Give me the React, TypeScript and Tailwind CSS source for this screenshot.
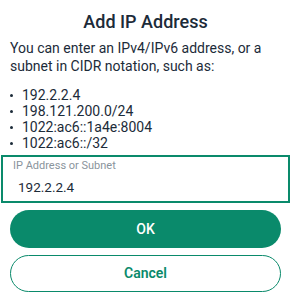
import React from "react";

const examples = ["192.2.2.4", "198.121.200.0/24", "1022:ac6::1a4e:8004", "1022:ac6::/32"];

const App = () => {
  return (
    <div className="w-[291px] h-[300px] bg-white font-['Roboto',sans-serif] text-[#1c2b39] overflow-hidden">
      <h2 className="pt-[10px] text-center text-[18px] leading-[24px] font-medium">Add IP Address</h2>
      <p className="mt-[5px] px-[10px] text-[14px] leading-[18px]">
        You can enter an IPv4/IPv6 address, or a subnet in CIDR notation, such as:
      </p>
      <ul className="mt-[12px] pl-[10px] text-[14px] leading-[16px]">
        {examples.map((e) => (
          <li key={e} className="flex items-center">
            <span className="w-[3px] h-[3px] rounded-full bg-[#1c2b39]" />
            <span className="ml-[9px]">{e}</span>
          </li>
        ))}
      </ul>
      <div className="mt-[4px] mx-[1px] border-[2px] border-[#0a8a6b] px-[10px] pt-[3px] pb-[5px]">
        <label htmlFor="ip" className="block text-[11px] leading-[12px] text-[#8a949c]">
          IP Address or Subnet
        </label>
        <input
          id="ip"
          defaultValue="192.2.2.4"
          className="block w-full mt-[6px] pl-[5px] text-[13.5px] leading-[18px] text-[#1c2b39] outline-none"
        />
      </div>
      <div className="mt-[7px] px-[10px] flex flex-col gap-[7px]">
        <button className="h-[38px] w-full rounded-full bg-[#0a8a6b] text-white text-[14px] font-medium">
          OK
        </button>
        <button className="h-[37px] w-full rounded-full border border-[#0a8a6b] text-[#0a8a6b] text-[14px] font-semibold">
          Cancel
        </button>
      </div>
    </div>
  );
};

export default App;
